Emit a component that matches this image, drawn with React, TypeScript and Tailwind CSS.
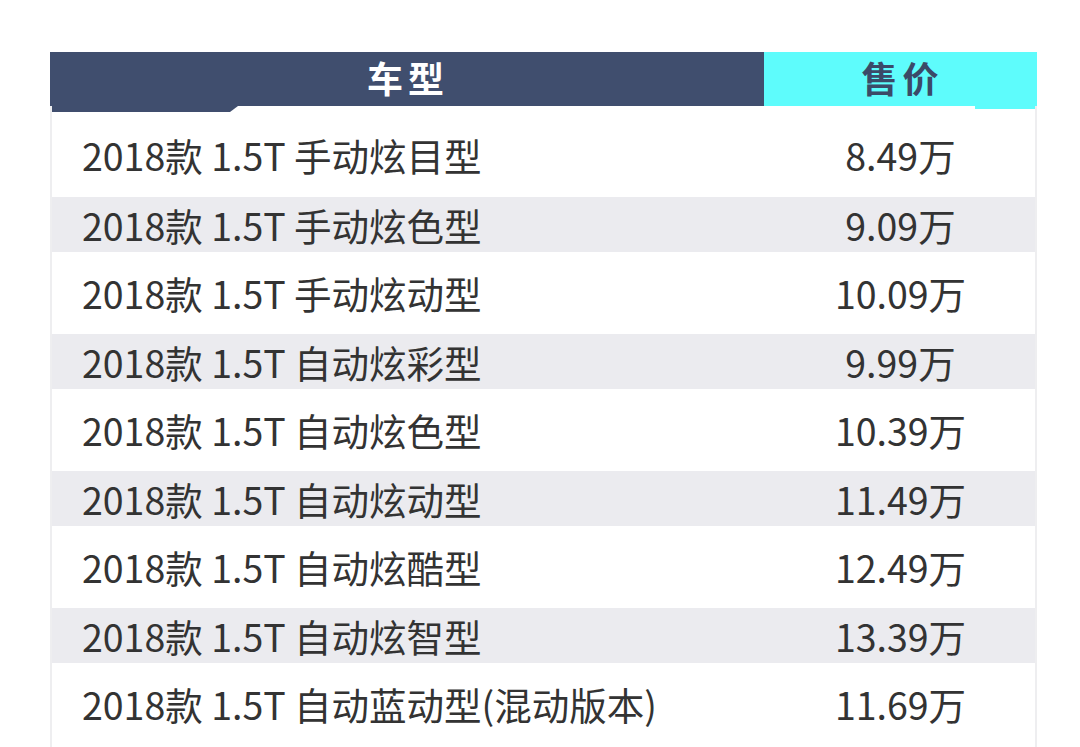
const rows = [
  ["2018款 1.5T 手动炫目型", "8.49万"],
  ["2018款 1.5T 手动炫色型", "9.09万"],
  ["2018款 1.5T 手动炫动型", "10.09万"],
  ["2018款 1.5T 自动炫彩型", "9.99万"],
  ["2018款 1.5T 自动炫色型", "10.39万"],
  ["2018款 1.5T 自动炫动型", "11.49万"],
  ["2018款 1.5T 自动炫酷型", "12.49万"],
  ["2018款 1.5T 自动炫智型", "13.39万"],
  ["2018款 1.5T 自动蓝动型(混动版本)", "11.69万"],
];

export default function App() {
  return (
    <div
      className="w-[1080px] h-[747px] overflow-hidden bg-white pt-[52px] pl-[50px]"
      style={{ fontFamily: '"Noto Sans CJK SC", "Noto Sans", sans-serif' }}
    >
      <div className="w-[987px]">
        {/* header */}
        <div className="flex h-[54px]">
          <div className="w-[714px] bg-[#404e6e] flex items-center justify-center pb-[5px] pl-[2px] text-white text-[36px] font-bold tracking-[5px]">
            车型
          </div>
          <div className="flex-1 bg-[#5efcfc] flex items-center justify-center pb-[5px] pl-[4px] text-[#3b4a68] text-[36px] font-bold tracking-[5px]">
            售价
          </div>
        </div>

        {/* body */}
        <div className="border-x-2 border-[#eeeef0]">
          <div className="h-[6px] flex justify-between">
            <div className="w-[186px] bg-[#404e6e] [clip-path:polygon(0_0,100%_0,calc(100%-8px)_100%,0_100%)]" />
            <div className="w-[60px] h-[3px] bg-[#5efcfc]" />
          </div>
          {rows.map(([name, price], i) => (
            <div
              key={i}
              className={
                i % 2 === 1
                  ? "flex items-center h-[55px] pt-[1px] bg-[#ebebef] text-[#333333] text-[37.5px]"
                  : i === 0
                  ? "flex items-center h-[85px] pt-[1px] bg-white text-[#333333] text-[37.5px]"
                  : "flex items-center h-[82px] pt-[1px] bg-white text-[#333333] text-[37.5px]"
              }
            >
              <div className="w-[712px] pl-[30px] whitespace-nowrap">{name}</div>
              <div className="flex-1 text-center pl-[2px]">{price}</div>
            </div>
          ))}
          <div className="h-[4px] bg-white" />
          <div className="h-[55px] bg-[#ebebef]" />
        </div>
      </div>
    </div>
  );
}
